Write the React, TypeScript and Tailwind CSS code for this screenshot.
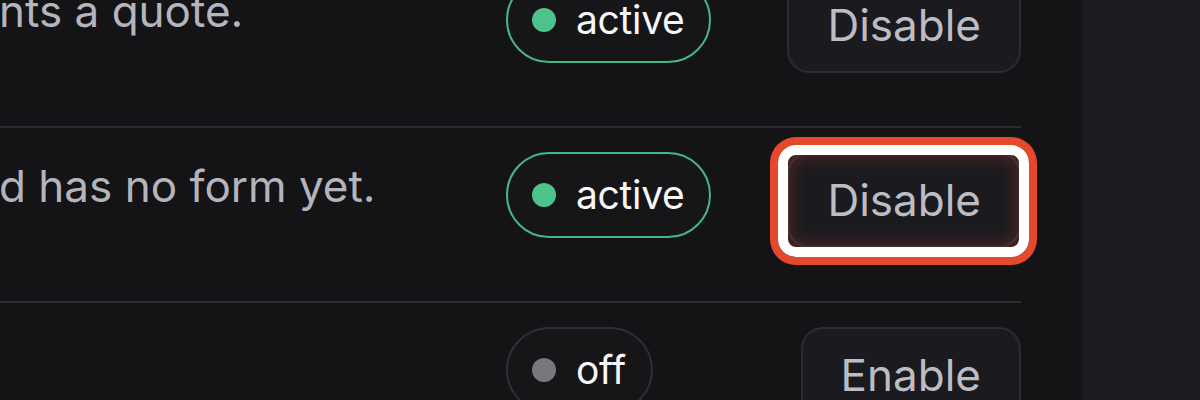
import React from 'react';

interface Trigger {
  id: number;
  description: string;
  status: 'active' | 'off';
  highlighted?: boolean;
}

const triggers: Trigger[] = [
  { id: 1, description: 'nts a quote.', status: 'active' },
  { id: 2, description: 'd has no form yet.', status: 'active', highlighted: true },
  { id: 3, description: '', status: 'off' },
];

function StatusBadge({ status }: { status: Trigger['status'] }) {
  const active = status === 'active';
  return (
    <span
      className={`flex items-center gap-[20px] h-[86px] pl-[24px] pr-[25px] rounded-full border-[2.5px] bg-[#161619] text-[39px] tracking-[-0.3px] text-[#f7f7f8] ${
        active ? 'border-[#46b784]' : 'border-[#2f2f35]'
      }`}
    >
      <span className={`w-[24px] h-[24px] rounded-full ${active ? 'bg-[#4cc38a]' : 'bg-[#77777f]'}`}></span>
      {status}
    </span>
  );
}

function ToggleButton({ status, highlighted }: { status: Trigger['status']; highlighted?: boolean }) {
  return (
    <div className="relative">
      <button className="h-[96px] px-[38px] rounded-[22px] border-2 border-[#2c2c32] bg-[#1b1b1f] text-[44px] text-[#bcbcc4]">
        {status === 'active' ? 'Disable' : 'Enable'}
      </button>
      {highlighted && (
        <div className="absolute -left-[9px] -top-[7px] -right-[8px] -bottom-[9px] rounded-[18px] border-[10px] border-white shadow-[0_0_0_8px_#e5482b,inset_0_0_18px_rgba(215,70,55,0.4)] pointer-events-none"></div>
      )}
    </div>
  );
}

export default function App() {
  return (
    <div className="w-[1200px] h-[400px] flex overflow-hidden bg-[#141416] font-['Inter',sans-serif]">
      <main className="w-[1082px] shrink-0 pr-[61px]">
        <div className="-mt-[49px]">
          {triggers.map((t) => (
            <div key={t.id} className="flex items-start h-[175px] pt-[24px] border-t-2 border-[#2b2b30]">
              <p className="w-[507px] shrink-0 -ml-[1px] mt-[6px] text-[44px] leading-[56px] text-[#b4b4bc] whitespace-nowrap">
                {t.description}
              </p>
              <StatusBadge status={t.status} />
              <div className="ml-auto">
                <ToggleButton status={t.status} highlighted={t.highlighted} />
              </div>
            </div>
          ))}
        </div>
      </main>
      <aside className="flex-1 bg-[#1c1c20]"></aside>
    </div>
  );
}
